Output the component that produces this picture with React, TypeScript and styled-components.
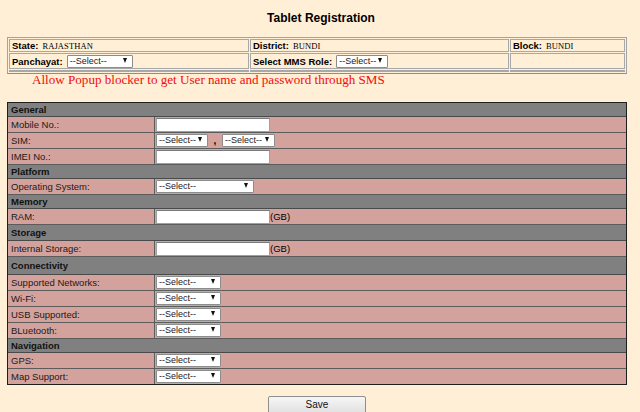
import React from "react";
import styled, { createGlobalStyle } from "styled-components";

const Global = createGlobalStyle`
  html, body { margin: 0; padding: 0; background: #ffefd6; }
  body { font-family: "Liberation Sans", Arial, sans-serif; color: #000; }
  * { box-sizing: border-box; }
`;

const Page = styled.div`
  width: 640px;
  height: 412px;
  overflow: hidden;
  display: flex;
  flex-direction: column;
`;

const Title = styled.h1`
  margin: 11px 0 0;
  font-size: 12px;
  line-height: 14px;
  font-weight: bold;
  text-align: center;
  padding-left: 2px;
`;

const InfoTable = styled.div`
  margin: 12px 13px 0 7px;
  border: 1px solid #a3a3a3;
  border-bottom-color: #8d8d8d;
  padding: 1px;
  display: grid;
  grid-template-columns: 240px 259px 1fr;
  gap: 1px;
`;

const InfoCell = styled.div<{ $h: number }>`
  height: ${(p) => p.$h}px;
  border: 1px solid #a8a8a8;
  display: flex;
  align-items: center;
  padding-left: 2px;
  gap: 4px;
  font-size: 9.5px;
`;

const InfoLabel = styled.b`
  font-weight: bold;
  font-size: 9.5px;
`;

const InfoValue = styled.span`
  font-family: "Liberation Serif", "Times New Roman", serif;
  font-size: 8.5px;
  letter-spacing: 0.1px;
`;

const Notice = styled.div`
  margin: -2px 0 0 32px;
  height: 16px;
  line-height: 16px;
  font-family: "Liberation Serif", "Times New Roman", serif;
  font-size: 13.1px;
  color: #f20c0c;
`;

const FormTable = styled.div`
  margin: 14px 13px 0 7px;
  border: 1px solid #1e1e1e;
  display: flex;
  flex-direction: column;
`;

const SectionRow = styled.div<{ $h: number }>`
  height: ${(p) => p.$h}px;
  background: #808080;
  border-bottom: 1px solid #4a4a4a;
  display: flex;
  align-items: center;
  padding-left: 3px;
  font-size: 9.5px;
  font-weight: bold;
  color: #111;
`;

const FieldRow = styled.div<{ $last?: boolean }>`
  height: ${(p) => (p.$last ? 15 : 16)}px;
  background: #d3a29c;
  border-bottom: ${(p) => (p.$last ? "none" : "1px solid #5c5c5c")};
  display: grid;
  grid-template-columns: 147px 1fr;
`;

const Label = styled.div`
  border-right: 1px solid #5c5c5c;
  display: flex;
  align-items: center;
  padding-left: 3px;
  font-size: 9.5px;
  color: #1a1a1a;
`;

const Value = styled.div`
  display: flex;
  align-items: center;
  padding-left: 1px;
  gap: 2px;
  font-size: 9.5px;
`;

const TextBox = styled.input`
  width: ${(p) => p.width ?? 114}px;
  height: 14px;
  margin: 0;
  padding: 0 2px;
  border: 1px solid #a0a0a0;
  border-top-color: #7a7a7a;
  background: #fff;
  font-size: 9px;
`;

const SelectWrap = styled.span<{ $w: number }>`
  position: relative;
  display: inline-block;
  width: ${(p) => p.$w}px;
  height: 13px;
`;

const NativeSelect = styled.select`
  appearance: none;
  -webkit-appearance: none;
  width: 100%;
  height: 100%;
  margin: 0;
  padding: 0 0 0 2px;
  border: 1px solid #8c8c8c;
  border-radius: 1px;
  background: #fff;
  font-family: "Liberation Sans", Arial, sans-serif;
  font-size: 9px;
  line-height: 11px;
  color: #222;
`;

const Arrow = styled.span`
  position: absolute;
  right: 6px;
  top: 3px;
  width: 0;
  height: 0;
  border-left: 2.5px solid transparent;
  border-right: 2.5px solid transparent;
  border-top: 5px solid #111;
  pointer-events: none;
`;

const Comma = styled.span`
  width: 10px;
  text-align: center;
  font-size: 10px;
  font-weight: bold;
`;

const Unit = styled.span`
  font-size: 9.5px;
  margin-left: -2px;
`;

const Footer = styled.div`
  margin-top: 11px;
  display: flex;
  justify-content: center;
  padding-right: 6px;
`;

const SaveButton = styled.button`
  width: 98px;
  height: 20px;
  border: 1px solid #8e8e8e;
  border-radius: 2px;
  background: linear-gradient(#f6f6f6, #dedede);
  font-family: "Liberation Sans", Arial, sans-serif;
  font-size: 10px;
  color: #111;
  padding: 0 0 4px;
`;

const Select = ({ w }: { w: number }) => (
  <SelectWrap $w={w}>
    <NativeSelect defaultValue="s">
      <option value="s">--Select--</option>
    </NativeSelect>
    <Arrow />
  </SelectWrap>
);

type Row =
  | { kind: "section"; title: string; h?: number }
  | { kind: "field"; label: string; content: React.ReactNode; last?: boolean };

const rows: Row[] = [
  { kind: "section", title: "General" },
  { kind: "field", label: "Mobile No.:", content: <TextBox /> },
  {
    kind: "field",
    label: "SIM:",
    content: (
      <>
        <Select w={52} />
        <Comma>,</Comma>
        <Select w={53} />
      </>
    ),
  },
  { kind: "field", label: "IMEI No.:", content: <TextBox /> },
  { kind: "section", title: "Platform" },
  { kind: "field", label: "Operating System:", content: <Select w={98} /> },
  { kind: "section", title: "Memory" },
  {
    kind: "field",
    label: "RAM:",
    content: (
      <>
        <TextBox width={114} />
        <Unit>(GB)</Unit>
      </>
    ),
  },
  { kind: "section", title: "Storage", h: 16 },
  {
    kind: "field",
    label: "Internal Storage:",
    content: (
      <>
        <TextBox width={114} />
        <Unit>(GB)</Unit>
      </>
    ),
  },
  { kind: "section", title: "Connectivity", h: 18 },
  { kind: "field", label: "Supported Networks:", content: <Select w={65} /> },
  { kind: "field", label: "Wi-Fi:", content: <Select w={65} /> },
  { kind: "field", label: "USB Supported:", content: <Select w={65} /> },
  { kind: "field", label: "BLuetooth:", content: <Select w={65} /> },
  { kind: "section", title: "Navigation" },
  { kind: "field", label: "GPS:", content: <Select w={65} /> },
  { kind: "field", label: "Map Support:", content: <Select w={65} />, last: true },
];

export default function App() {
  return (
    <Page>
      <Global />
      <Title>Tablet Registration</Title>
      <InfoTable>
        <InfoCell $h={13}>
          <InfoLabel>State:</InfoLabel>
          <InfoValue>RAJASTHAN</InfoValue>
        </InfoCell>
        <InfoCell $h={13}>
          <InfoLabel>District:</InfoLabel>
          <InfoValue>BUNDI</InfoValue>
        </InfoCell>
        <InfoCell $h={13}>
          <InfoLabel>Block:</InfoLabel>
          <InfoValue>BUNDI</InfoValue>
        </InfoCell>
        <InfoCell $h={16}>
          <InfoLabel>Panchayat:</InfoLabel>
          <Select w={66} />
        </InfoCell>
        <InfoCell $h={16}>
          <InfoLabel>Select MMS Role:</InfoLabel>
          <Select w={52} />
        </InfoCell>
        <InfoCell $h={16} />
        <InfoCell $h={2} />
        <InfoCell $h={2} />
        <InfoCell $h={2} />
      </InfoTable>
      <Notice>Allow Popup blocker to get User name and password through SMS</Notice>
      <FormTable>
        {rows.map((r, i) =>
          r.kind === "section" ? (
            <SectionRow key={i} $h={r.h ?? 14}>
              {r.title}
            </SectionRow>
          ) : (
            <FieldRow key={i} $last={r.last}>
              <Label>{r.label}</Label>
              <Value>{r.content}</Value>
            </FieldRow>
          )
        )}
      </FormTable>
      <Footer>
        <SaveButton>Save</SaveButton>
      </Footer>
    </Page>
  );
}
